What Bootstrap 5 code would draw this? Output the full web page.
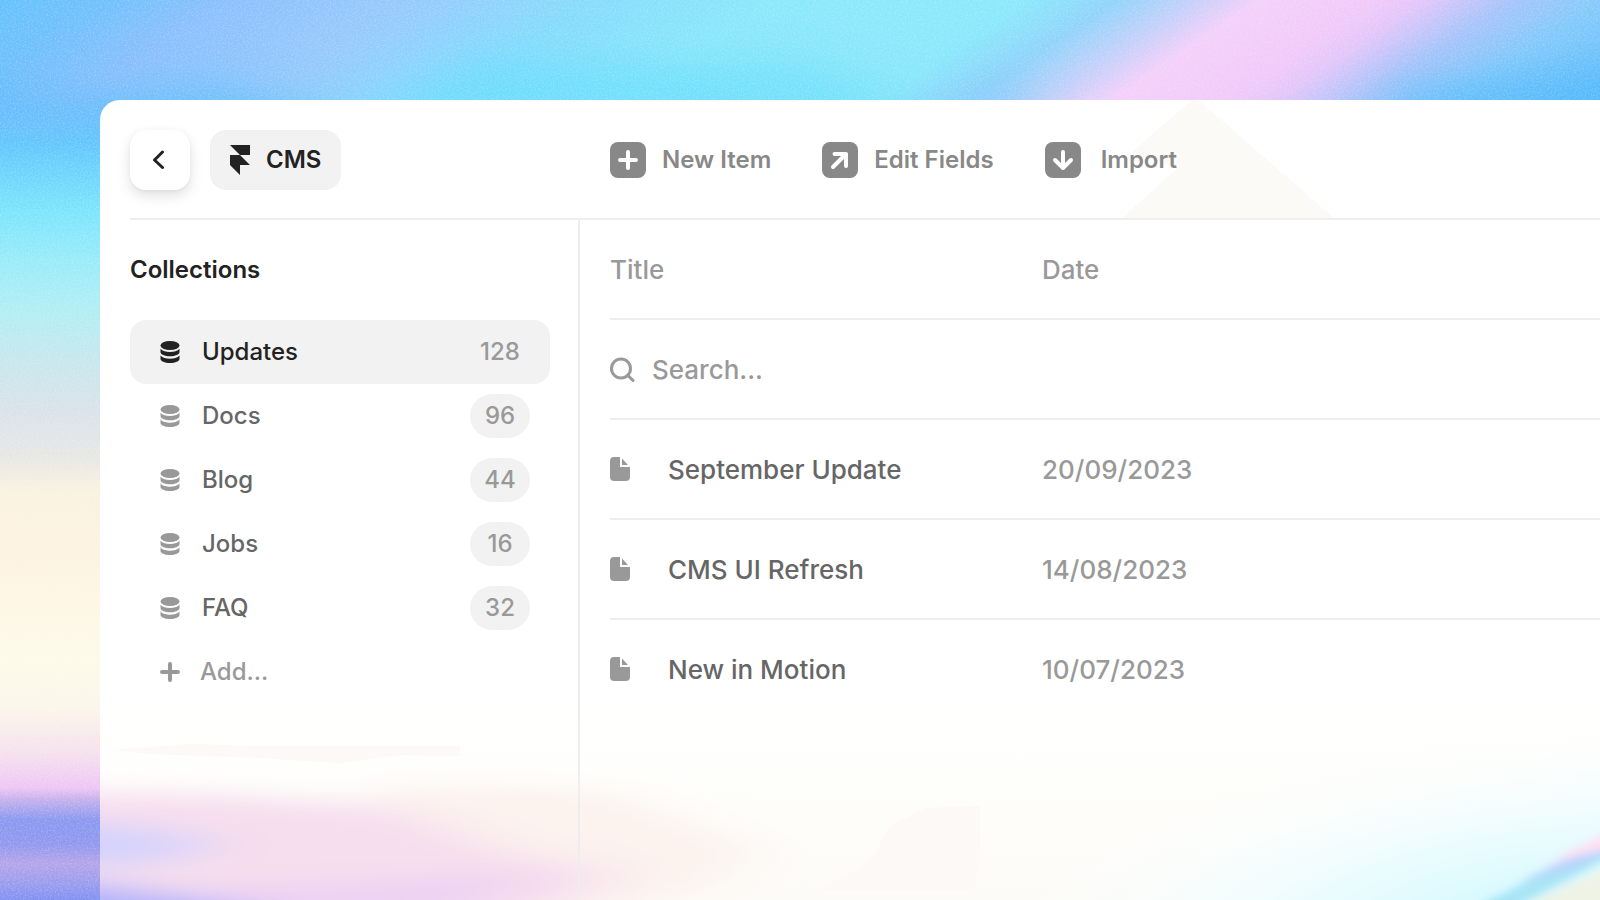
<!DOCTYPE html>
<html lang="en">
<head>
<meta charset="utf-8">
<meta name="viewport" content="width=device-width, initial-scale=1">
<title>CMS</title>
<link rel="stylesheet" href="https://cdn.jsdelivr.net/npm/bootstrap@5.3.0/dist/css/bootstrap.min.css">
<style>
  body { font-family: Inter, "Liberation Sans", sans-serif; font-weight: 500; color: #666; background: #7fdcfb; overflow: hidden; }
  .wallpaper { z-index: -1; }
  .window { margin: 100px 0 0 100px; min-height: calc(100vh - 100px); background: #fff; border-radius: 20px 0 0 0; padding-left: 30px; isolation: isolate; }
  .tint { z-index: -1; height: 200px; }
  .peak { z-index: -1; left: 1020px; width: 216px; height: 118px; }
  .topbar { height: 120px; padding-top: 2px; border-bottom: 2px solid #eee; font-size: 24px; font-weight: 600; }
  .topbar-start { width: 480px; gap: 20px; }
  .tool-btn { height: 60px; border-radius: 16px; border: 0; color: #222; font-weight: 600; }
  .back-btn { width: 60px; background: #fff; box-shadow: 0 6px 14px rgba(0,0,0,.12), 0 1px 4px rgba(0,0,0,.04); }
  .cms-btn { background: #f2f2f2; padding: 0 20px; gap: 16px; }
  .actions { gap: 51px; }
  .action { border: 0; background: none; color: #888; font-weight: 600; gap: 16px; padding: 0; }
  .sidebar { width: 450px; padding-right: 28px; border-right: 2px solid #eee; font-size: 24px; }
  .side-title { font-size: 24px; font-weight: 600; line-height: 100px; color: #222; margin: 0; }
  .item { height: 64px; border-radius: 16px; padding: 0 20px 0 30px; color: #666; text-decoration: none; font-weight: 500; }
  .item svg { color: #999; width: 20px; height: 22px; margin-right: 22px; }
  .item .count { min-width: 60px; height: 44px; line-height: 44px; border-radius: 22px; background: #f2f2f2; color: #999; text-align: center; }
  .item.active { background: #f2f2f2; color: #222; }
  .item.active svg { color: #222; }
  .item.add { color: #999; border: 0; background: none; }
  .item.add svg { margin-right: 20px; }
  .content { padding-left: 30px; }
  .grid { font-size: 26px; table-layout: fixed; border-collapse: separate; border-spacing: 0; }
  .grid td, .grid th { height: 100px; padding: 0; border-bottom: 2px solid #eee; vertical-align: middle; font-weight: 500; color: #999; background: none; }
  .grid tr:last-child > td { border-bottom-color: transparent; }
  .grid .col-title { width: 432px; }
  .grid .entry { color: #666; text-decoration: none; gap: 38px; }
  .search { gap: 17px; }
  .search input { font-weight: 500; font-size: 26px; color: #999; background: none; outline: 0; padding: 0; }
  .search input::placeholder { color: #999; opacity: 1; }
</style>
</head>
<body>
<!-- Wallpaper -->
<svg class="wallpaper position-fixed top-0 start-0 w-100 h-100" viewBox="0 0 1600 900" preserveAspectRatio="none" aria-hidden="true">
  <defs>
    <linearGradient id="sky" gradientUnits="userSpaceOnUse" x1="0" x2="1800" y1="0" y2="0" gradientTransform="skewX(-56)">
      <stop offset="0" stop-color="#64c2fc"/>
      <stop offset=".06" stop-color="#70c0fc"/>
      <stop offset=".13" stop-color="#8cc0fc"/>
      <stop offset=".23" stop-color="#96cafc"/>
      <stop offset=".33" stop-color="#86dcfc"/>
      <stop offset=".43" stop-color="#8ae8fb"/>
      <stop offset=".57" stop-color="#8ae8fb"/>
      <stop offset=".62" stop-color="#90d4fb"/>
      <stop offset=".67" stop-color="#ccd0fa"/>
      <stop offset=".70" stop-color="#f3d0fa"/>
      <stop offset=".76" stop-color="#f2caf9"/>
      <stop offset=".79" stop-color="#e4c6fa"/>
      <stop offset=".84" stop-color="#a6c4fa"/>
      <stop offset=".89" stop-color="#84cafb"/>
      <stop offset="1" stop-color="#60c0fa"/>
    </linearGradient>
    <linearGradient id="shore" gradientUnits="userSpaceOnUse" x1="0" x2="0" y1="100" y2="900">
      <stop offset="0" stop-color="#64bffc" stop-opacity="0"/>
      <stop offset=".05" stop-color="#62c4fb"/>
      <stop offset=".09" stop-color="#6cd4fc"/>
      <stop offset=".14" stop-color="#7ce5fc"/>
      <stop offset=".2" stop-color="#98ebf9"/>
      <stop offset=".26" stop-color="#b0eef4"/>
      <stop offset=".33" stop-color="#c8e7ec"/>
      <stop offset=".39" stop-color="#dae2ea"/>
      <stop offset=".45" stop-color="#e8e8e4"/>
      <stop offset=".49" stop-color="#faf2df"/>
      <stop offset=".56" stop-color="#fcf2df"/>
      <stop offset=".62" stop-color="#fef6e4"/>
      <stop offset=".7" stop-color="#fdfae9"/>
      <stop offset=".76" stop-color="#fbf6ea"/>
      <stop offset=".82" stop-color="#f5dfee"/>
      <stop offset=".86" stop-color="#edc6f5"/>
      <stop offset=".875" stop-color="#c4b0ec"/>
      <stop offset=".9" stop-color="#8a98f0"/>
      <stop offset=".93" stop-color="#9098ee"/>
      <stop offset=".955" stop-color="#b4a4ea"/>
      <stop offset=".98" stop-color="#9a9cee"/>
      <stop offset="1" stop-color="#8090f2"/>
    </linearGradient>
    <filter id="b20" x="-50%" y="-50%" width="200%" height="200%"><feGaussianBlur stdDeviation="22"/></filter>
    <filter id="grain" x="0" y="0" width="100%" height="100%">
      <feTurbulence type="fractalNoise" baseFrequency=".6" numOctaves="2" seed="4"/>
      <feColorMatrix values="0 0 0 0 1  0 0 0 0 1  0 0 0 0 1  .9 0 0 0 -.36"/>
    </filter>
  </defs>
  <rect width="1600" height="900" fill="url(#sky)"/>
  <g filter="url(#b20)">
    <path d="M330 130 480 60 800 70 960 120Z" fill="#62dcfc" opacity=".7"/>
    <path d="M-40 80 60 96 220 88 360 120 220 150 -40 130Z" fill="#58bcfb" opacity=".8"/>
    <path d="M980 86 1040 90 1030 130 900 140Z" fill="#70c4fa" opacity=".5"/>
    <path d="M1400 96 1640 60 1640 140 1370 130Z" fill="#50b8fb" opacity=".8"/>
  </g>
  <rect y="100" width="130" height="800" fill="url(#shore)"/>
  <rect width="1600" height="900" filter="url(#grain)" opacity=".5"/>
</svg>

<div class="window position-relative d-flex flex-column">
  <!-- Colour showing through the window's lower edge -->
  <svg class="tint position-absolute bottom-0 start-0 w-100" viewBox="100 700 1500 200" preserveAspectRatio="none" aria-hidden="true">
    <defs>
      <filter id="b14" x="-30%" y="-60%" width="160%" height="220%"><feGaussianBlur stdDeviation="36 11"/></filter>
      <filter id="b5" x="-30%" y="-60%" width="160%" height="220%"><feGaussianBlur stdDeviation="4"/></filter>
      <linearGradient id="fade" x2="0" y2="1">
        <stop offset="0" stop-color="#fff"/>
        <stop offset=".4" stop-color="#fefefb"/>
        <stop offset="1" stop-color="#fdfbf7"/>
      </linearGradient>
      <radialGradient id="aqua" gradientUnits="userSpaceOnUse" cx="0" cy="0" r="1" gradientTransform="translate(1560 920) rotate(-6) scale(600 190)">
        <stop offset="0" stop-color="#cef8fd"/>
        <stop offset=".3" stop-color="#e0fbfe"/>
        <stop offset=".6" stop-color="#f2fdfe" stop-opacity=".9"/>
        <stop offset="1" stop-color="#fcffff" stop-opacity="0"/>
      </radialGradient>
    </defs>
    <rect x="100" y="700" width="1500" height="200" fill="url(#fade)"/>
    <rect x="900" y="700" width="700" height="200" fill="url(#aqua)"/>
    <g filter="url(#b14)">
      <path d="M380 785 600 790 760 850 700 890 540 930 380 930Z" fill="#fcf2ee"/>
      <path d="M-20 792 200 794 400 808 500 850 620 872 520 930 -20 940Z" fill="#f6deee"/>
      <path d="M-20 818 140 826 230 846 130 866 -20 866Z" fill="#d4d2fd"/>
      <path d="M200 888 400 880 540 872 480 900 380 940 200 940Z" fill="#edd2f3"/>
      <path d="M-20 878 120 886 260 910 260 940 -20 940Z" fill="#b0b2fb"/>
    </g>
    <g filter="url(#b5)">
      <path d="M1470 910 1530 880 1620 836 1620 852 1500 915Z" fill="#a8e4f6"/>
      <path d="M1520 882 1560 862 1620 838 1620 848 1570 870Z" fill="#b8d4fc"/>
      <path d="M1545 864 1620 826 1620 846Z" fill="#ffe0f4"/>
      <path d="M1510 912 1620 862 1620 920Z" fill="#eff3e6"/>
    </g>
    <path d="M114 750 190 744 260 746H460V756L400 755 340 763 260 758 150 754Z" fill="#fcf9f7"/>
    <path d="M890 826 925 808 980 806V860L974 890H820L870 862Z" fill="#fcf9f7"/>
  </svg>
  <svg class="peak position-absolute top-0" viewBox="0 0 216 118" preserveAspectRatio="none" aria-hidden="true">
    <path d="M2 118 58 68 12 52 68 3Q75-2 82 3L214 118Z" fill="#fcfaf7"/>
  </svg>

  <header class="topbar d-flex align-items-center">
    <div class="topbar-start d-flex flex-shrink-0">
      <button type="button" class="tool-btn back-btn d-flex align-items-center justify-content-center p-0" aria-label="Back">
        <svg width="20" height="20" viewBox="0 0 20 20" fill="none" stroke="#222" stroke-width="3" stroke-linecap="round" stroke-linejoin="round"><path d="M12.500 2 4.500 10l8 7.500"/></svg>
      </button>
      <button type="button" class="tool-btn cms-btn d-flex align-items-center">
        <svg width="20" height="30" viewBox="0 0 20 30" fill="#222" aria-hidden="true"><path d="M0 0h20v10H10ZM0 10h10l10 10H10v10L0 20Z"/></svg>
        CMS
      </button>
    </div>
    <nav class="actions d-flex" aria-label="Collection actions">
      <button type="button" class="action d-flex align-items-center">
        <svg width="36" height="36" viewBox="0 0 36 36" fill="none" stroke="#fff" stroke-width="4" stroke-linecap="round" aria-hidden="true"><rect width="36" height="36" rx="8" fill="#888" stroke="none"/><path d="M18 10v16M10 18h16"/></svg>
        New Item
      </button>
      <button type="button" class="action d-flex align-items-center">
        <svg width="36" height="36" viewBox="0 0 36 36" fill="none" stroke="#fff" stroke-width="4" stroke-linecap="round" stroke-linejoin="round" aria-hidden="true"><rect width="36" height="36" rx="8" fill="#888" stroke="none"/><path d="M12.500 12H24v12M24 12 11 25"/></svg>
        Edit Fields
      </button>
      <button type="button" class="action d-flex align-items-center">
        <svg width="36" height="36" viewBox="0 0 36 36" fill="none" stroke="#fff" stroke-width="4" stroke-linecap="round" stroke-linejoin="round" aria-hidden="true"><rect width="36" height="36" rx="8" fill="#888" stroke="none"/><path d="M18 10v15.500M10 18l8 8 8-8"/></svg>
        <span class="ps-1">Import</span>
      </button>
    </nav>
  </header>

  <svg class="d-none" aria-hidden="true">
    <symbol id="db" viewBox="0 0 20 22"><g fill="currentColor"><ellipse cx="10" cy="4.500" rx="9.500" ry="4.500"/><path d="M.5 7.800C2.500 10 6 11 10 11s7.500-1 9.500-3.200V11c0 2.500-4.200 4.300-9.500 4.300S.5 13.500.5 11Z"/><path d="M.5 14.500C2.500 16.700 6 17.700 10 17.700s7.500-1 9.500-3.200v3.200c0 2.500-4.200 4.300-9.500 4.300S.5 20.200.5 17.700Z"/></g></symbol>
    <symbol id="doc" viewBox="0 0 20 24"><path fill="currentColor" d="M4 0h6v10h10v10a4 4 0 0 1-4 4H4a4 4 0 0 1-4-4V4a4 4 0 0 1 4-4ZM12 1.500 18 8h-6Z"/></symbol>
  </svg>

  <div class="d-flex flex-grow-1">
    <aside class="sidebar flex-shrink-0">
      <h2 class="side-title">Collections</h2>
      <nav aria-label="Collections">
        <a href="#" class="item active d-flex align-items-center" aria-current="page"><svg aria-hidden="true"><use href="#db"/></svg>Updates<span class="count ms-auto">128</span></a>
        <a href="#" class="item d-flex align-items-center"><svg aria-hidden="true"><use href="#db"/></svg>Docs<span class="count ms-auto">96</span></a>
        <a href="#" class="item d-flex align-items-center"><svg aria-hidden="true"><use href="#db"/></svg>Blog<span class="count ms-auto">44</span></a>
        <a href="#" class="item d-flex align-items-center"><svg aria-hidden="true"><use href="#db"/></svg>Jobs<span class="count ms-auto">16</span></a>
        <a href="#" class="item d-flex align-items-center"><svg aria-hidden="true"><use href="#db"/></svg>FAQ<span class="count ms-auto">32</span></a>
        <button type="button" class="item add d-flex align-items-center w-100"><svg viewBox="0 0 20 22" fill="none" stroke="currentColor" stroke-width="4" stroke-linecap="round" aria-hidden="true"><path d="M10 3v16M2 11h16"/></svg>Add...</button>
      </nav>
    </aside>

    <main class="content flex-grow-1">
      <table class="grid w-100">
        <thead>
          <tr><th class="col-title" scope="col">Title</th><th scope="col">Date</th></tr>
        </thead>
        <tbody>
          <tr><td colspan="2">
            <label class="search d-flex align-items-center">
              <svg width="25" height="25" viewBox="0 0 25 25" fill="none" stroke="#999" stroke-width="3" stroke-linecap="round" aria-hidden="true"><circle cx="11" cy="11.500" r="9.500"/><path d="m18 18.500 5 5"/></svg>
              <input type="text" class="border-0 flex-grow-1" placeholder="Search..." aria-label="Search">
            </label>
          </td></tr>
          <tr><td><a href="#" class="entry d-flex align-items-center"><svg width="20" height="24" color="#999" aria-hidden="true"><use href="#doc"/></svg>September Update</a></td><td>20/09/2023</td></tr>
          <tr><td><a href="#" class="entry d-flex align-items-center"><svg width="20" height="24" color="#999" aria-hidden="true"><use href="#doc"/></svg>CMS UI Refresh</a></td><td>14/08/2023</td></tr>
          <tr><td><a href="#" class="entry d-flex align-items-center"><svg width="20" height="24" color="#999" aria-hidden="true"><use href="#doc"/></svg>New in Motion</a></td><td>10/07/2023</td></tr>
        </tbody>
      </table>
    </main>
  </div>
</div>
<script src="https://cdn.jsdelivr.net/npm/bootstrap@5.3.0/dist/js/bootstrap.bundle.min.js"></script>
</body>
</html>
